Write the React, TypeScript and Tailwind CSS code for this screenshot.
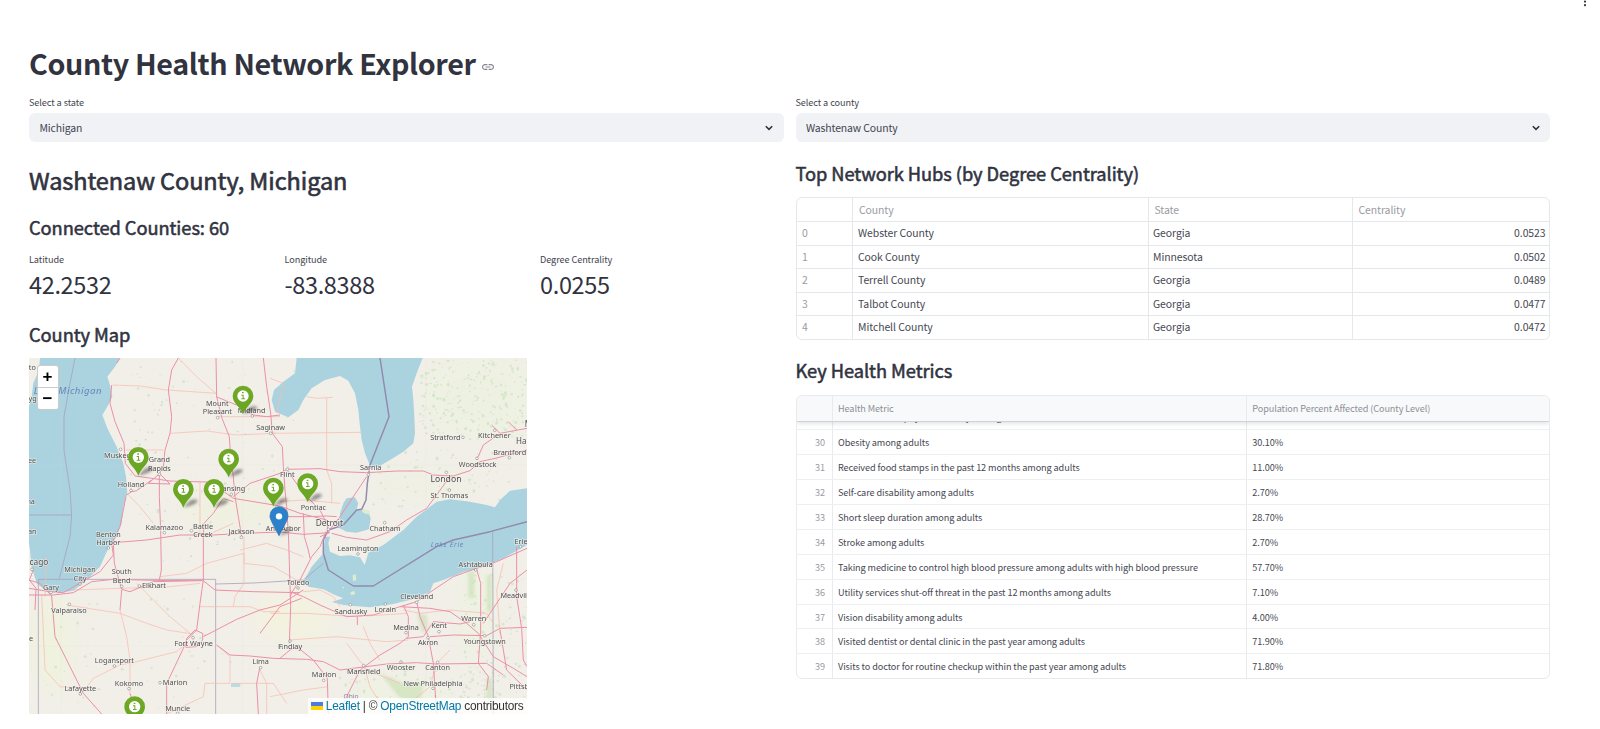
import React from "react";

const SANS = "font-['Noto_Sans_CJK_SC','Source_Sans_Pro',sans-serif]";

const hubs = [
  ["Webster County", "Georgia", "0.0523"],
  ["Cook County", "Minnesota", "0.0502"],
  ["Terrell County", "Georgia", "0.0489"],
  ["Talbot County", "Georgia", "0.0477"],
  ["Mitchell County", "Georgia", "0.0472"],
];

const metrics = [
  ["30", "Obesity among adults", "30.10%"],
  ["31", "Received food stamps in the past 12 months among adults", "11.00%"],
  ["32", "Self-care disability among adults", "2.70%"],
  ["33", "Short sleep duration among adults", "28.70%"],
  ["34", "Stroke among adults", "2.70%"],
  ["35", "Taking medicine to control high blood pressure among adults with high blood pressure", "57.70%"],
  ["36", "Utility services shut-off threat in the past 12 months among adults", "7.10%"],
  ["37", "Vision disability among adults", "4.00%"],
  ["38", "Visited dentist or dental clinic in the past year among adults", "71.90%"],
  ["39", "Visits to doctor for routine checkup within the past year among adults", "71.80%"],
];

// Map drawing units: three per pixel.
const water = [
  "27,170 35,140 40,100 57,60 60,24 300,24 285,50 262,80 270,105 277,140 262,170 247,195 262,235 290,290 310,340 318,380 322,430 310,470 305,520 290,560 265,595 240,650 200,690 160,722 110,730 75,720 50,700 35,650 30,600 27,580",
  "830,24 825,70 790,95 762,120 755,150 765,185 805,202 835,180 850,150 875,115 915,90 960,78 985,92 1005,130 1015,180 1020,230 1025,270 1035,310 1052,352 1075,350 1110,330 1150,305 1180,280 1185,250 1183,200 1180,150 1176,110 1190,70 1208,24",
  "970,460 980,445 1005,442 1015,460 1010,478 1045,485 1052,505 1047,538 1010,548 980,545 950,530 960,515 960,490",
  "1521,415 1470,422 1440,450 1425,472 1400,465 1350,455 1290,448 1250,455 1190,500 1150,540 1090,585 1045,608 1034,645 1020,622 990,616 960,618 930,605 925,580 930,560 915,560 910,610 875,650 850,695 865,710 910,718 945,735 970,745 935,756 970,765 1000,768 1050,772 1120,762 1190,745 1230,725 1240,700 1270,690 1330,666 1390,650 1450,625 1521,585",
];
const islands = ["998,676 1007,672 1009,690 999,694", "990,728 1002,722 1006,732 994,736", "966,712 972,710 972,716", "1018,474 1050,482 1050,494 1032,490"];

const borders = [
  "165,24 150,100 132,200 132,300 150,420 155,495 150,560 118,685",
  "27,495 155,495",
  "55,688 587,688 587,1092",
  "55,688 55,1092",
  "587,702 700,699 850,690 910,640",
  "1418,545 1420,1092",
];
const boundary =
  "1080,24 1107,200 1050,345 1042,400 1038,450 1025,478 1010,480 970,525 925,540 910,570 910,610 925,660 1000,708 1060,708 1250,590 1300,570 1410,545 1521,515";

const majorRoads = [
  "475,24 455,60 445,120 455,200 450,250 435,300 430,350 418,372 418,440 422,540 424,660 418,690",
  "275,105 270,160 285,215 312,280 316,340 345,378 395,385 450,393 520,395 560,396 605,420 640,445 780,468 840,490 920,510",
  "420,370 385,400 450,402 420,372",
  "320,435 335,425 350,422 395,390",
  "588,24 590,140 606,205 628,260 632,320 640,380 645,440 655,500 665,560",
  "730,24 740,110 752,190 757,250 787,290 790,350 795,420 800,470 806,570",
  "780,195 740,200 700,195 650,165 588,140",
  "640,440 690,400 780,370 800,358 900,356 960,365 1040,368 1130,363 1210,363 1240,375 1300,378 1350,362 1380,335 1425,325 1521,300",
  "640,455 610,445 580,490 552,520 550,560 550,690 540,760 530,840",
  "530,840 500,870 490,895 450,980 440,1000 440,1092",
  "27,735 100,735 160,728 215,695 280,688 450,692 547,690 585,720 700,725 838,728",
  "300,24 290,40",
  "40,660 28,690 48,715 45,780",
  "27,715 90,725 130,728 240,665 280,615 275,580 300,530 318,440",
  "95,738 105,860 190,1030 245,1092",
  "280,580 283,640 305,718 330,725 400,695 547,692",
  "305,720 300,780",
  "497,890 500,865 525,840 548,850 548,870 530,890 497,892",
  "550,860 650,808 720,780 780,765 850,720",
  "280,578 380,570 480,555 580,555 670,550 780,546 850,553 930,548",
  "800,358 850,430 900,480 925,530",
  "918,545 900,590 875,620 840,690 820,720 810,740",
  "925,545 960,500 1040,380",
  "806,570 808,640 812,770 808,880",
  "850,490 853,560 865,600 870,625",
  "920,515 925,550 900,560",
  "780,500 860,500 920,498 950,500",
  "935,550 980,562 1040,570 1110,545 1160,510 1220,475 1290,380",
  "1415,225 1440,250 1390,285 1370,330",
  "1465,215 1490,240",
  "1440,250 1521,235",
  "810,725 850,740 900,765 980,800 1060,795 1140,770 1190,755 1240,720 1300,680 1370,655 1430,635 1521,595",
  "1012,800 1012,825",
  "720,850 780,770 845,745",
  "720,950 710,1000 715,1092",
  "590,885 630,915 690,918 760,925 860,928 910,935 960,960 1100,942 1190,938 1250,942 1400,940 1450,975",
  "780,925 810,900 830,890 880,930 922,985 925,1092",
  "970,1060 1020,960 1080,915 1140,880 1165,860 1165,800 1150,765",
  "1140,770 1230,775 1290,785 1340,820 1375,850 1420,920 1480,955 1521,980",
  "1190,755 1200,800 1225,860 1240,940 1250,1092",
  "1370,658 1382,700 1382,840 1375,940 1405,980 1400,1020",
  "1490,590 1490,740 1505,835 1510,930 1521,950",
  "1230,860 1300,855 1400,857 1440,835 1521,832",
  "1160,865 1210,860 1240,815 1320,822 1350,815",
  "1440,840 1450,900 1460,960 1521,1020",
  "1390,820 1470,700 1521,660",
  "27,690 60,700 95,738",
  "330,1030 340,1060 345,1092",
];

const minorRoads = [
  "278,105 360,108 440,120 590,130",
  "475,24 530,80 588,130",
  "450,250 560,243 650,255 760,250 1025,247",
  "318,300 430,300",
  "590,200 700,200 780,200",
  "540,396 540,550",
  "320,430 360,470 400,520",
  "750,85 790,100 770,190",
  "860,140 890,145 938,142",
  "920,145 920,360",
  "920,360 935,400 935,460",
  "780,455 850,450 960,460",
  "660,600 740,580 800,600 850,620",
  "155,720 450,710 540,700",
  "65,735 75,960 120,1010 180,1015",
  "190,1025 220,985 300,945 350,935 470,905 500,880",
  "300,780 320,860 330,930 330,1030",
  "140,765 300,790 380,820 440,840 520,852",
  "350,700 400,750 450,800 510,850",
  "420,680 500,670 560,640 672,610 672,700 645,740 640,770",
  "672,560 672,640 760,650 830,690",
  "540,770 690,770 730,785 780,785",
  "590,885 630,920 630,1000 555,1000 550,1040 440,1092",
  "640,1000 760,1000 800,1060",
  "720,960 740,1000 740,1092",
  "808,870 950,860 1100,875 1165,870",
  "1030,830 1050,880 1080,930",
  "750,790 860,790 1010,800 1160,790",
  "1030,940 1050,1010 1100,1092",
  "1150,780 1200,790 1290,780",
  "1290,780 1400,790 1420,820",
  "980,880 1040,960 1140,1000",
  "1450,640 1430,720 1440,850",
  "750,1040 850,1020 925,1010",
  "1290,900 1250,940 1230,1010 1180,1050",
  "850,725 900,720 940,740 960,770",
  "75,740 80,620",
  "552,560 640,520",
];

const cities: [string, number, number, number?][] = [
  ["Mount", 592, 167], ["Pleasant", 592, 193], ["Midland", 695, 188], ["Saginaw", 752, 241],
  ["Muskegon", 306, 323], ["Grand", 418, 336], ["Rapids", 418, 362], ["Holland", 333, 410],
  ["Lansing", 636, 424], ["Kalamazoo", 433, 540], ["Battle", 549, 536], ["Creek", 549, 561],
  ["Jackson", 664, 552], ["Ann Arbor", 790, 542], ["Benton", 265, 560], ["Harbor", 265, 586],
  ["Flint", 802, 381], ["Pontiac", 880, 480], ["Detroit", 928, 527, 25], ["Chatham", 1095, 543],
  ["Sarnia", 1052, 360], ["Stratford", 1276, 271], ["Kitchener", 1423, 264], ["Hamilton", 1540, 282, 24],
  ["Brantford", 1469, 314], ["Woodstock", 1373, 352], ["London", 1278, 396, 26], ["St. Thomas", 1288, 445],
  ["M", 1525, 232, 24], ["Leamington", 1014, 602], ["Michigan", 180, 667], ["City", 180, 693],
  ["South", 305, 673], ["Bend", 305, 698], ["Elkhart", 402, 715], ["Gary", 93, 719],
  ["Valparaiso", 147, 788], ["Fort Wayne", 521, 887], ["Logansport", 283, 938], ["Kokomo", 327, 1007],
  ["Marion", 465, 1005], ["Lafayette", 181, 1024], ["Muncie", 473, 1082], ["Lima", 722, 942],
  ["Toledo", 834, 705], ["Sandusky", 993, 791], ["Lorain", 1096, 786], ["Cleveland", 1190, 746],
  ["Medina", 1158, 839], ["Kent", 1257, 835], ["Akron", 1224, 885], ["Warren", 1361, 814],
  ["Youngstown", 1394, 882], ["Ashtabula", 1367, 651], ["Erie", 1503, 581], ["Meadville", 1490, 743],
  ["Findlay", 810, 897], ["Mansfield", 1031, 971], ["Wooster", 1143, 959], ["Canton", 1253, 961],
  ["Marion", 912, 981], ["New Philadelphia", 1239, 1007], ["Pittsburgh", 1522, 1018], ["Chicago", 38, 646, 25],
  ["ee", 36, 338], ["ha", 32, 462], ["an", 37, 553], ["to", 37, 60], ["yg", 38, 153], ["e", 33, 874], ["F", 782, 897],
];

const dots = [
  [593, 203], [697, 198], [752, 250], [302, 298], [418, 373], [333, 421], [634, 433], [433, 548], [514, 542],
  [664, 562], [265, 594], [802, 358], [1045, 374], [1329, 262], [1424, 241], [1468, 323], [1371, 325], [1279, 367],
  [1288, 420], [1094, 518], [925, 538], [1014, 612], [180, 702], [305, 709], [358, 708], [93, 727], [148, 763],
  [519, 863], [283, 948], [327, 1016], [420, 998], [181, 1032], [473, 1090], [722, 953], [834, 714], [991, 764],
  [1096, 762], [1190, 757], [1158, 848], [1257, 845], [1224, 863], [1361, 824], [1394, 857], [1367, 660],
  [1501, 590], [1488, 720], [810, 873], [1031, 947], [1143, 936], [1253, 937], [911, 991], [1239, 1015], [36, 658],
];

const greenPins = [[669, 192], [355, 376], [626, 381], [490, 472], [582, 472], [760, 468], [863, 455], [344, 1124]];

// Deterministic speckle standing for woods and ponds.
function speckle(seed: number, n: number, x0: number, y0: number, w: number, h: number) {
  let s = seed * 7919;
  const next = () => (s = (s * 16807) % 2147483647) / 2147483647;
  next();
  return Array.from({ length: n }, () => {
    const x = x0 + next() * w;
    const y = y0 + next() * h;
    const r = 1 + next() * 3.6;
    return [x, y, r, 0.4 + next()] as const;
  });
}
const woods = [
  ...speckle(11, 300, 1200, 30, 320, 240),
  ...speckle(29, 90, 1060, 300, 460, 180),
  ...speckle(41, 160, 1330, 670, 190, 410),
  ...speckle(53, 120, 960, 960, 480, 130),
  ...speckle(67, 90, 330, 30, 500, 500),
  ...speckle(71, 60, 60, 740, 500, 340),
];
const ponds = [...speckle(83, 40, 340, 120, 400, 460), ...speckle(97, 26, 300, 560, 400, 400), ...speckle(101, 20, 1200, 60, 320, 280)];

function Lines({ list, stroke, width }: { list: string[]; stroke: string; width: number }) {
  return (
    <g fill="none" stroke={stroke} strokeWidth={width} strokeLinejoin="round">
      {list.map((p) => (
        <polyline key={p} points={p} />
      ))}
    </g>
  );
}

function CountyMap() {
  return (
    <div className="relative mt-[10px] h-[356px] w-[498px] overflow-hidden bg-[#f2efe9]">
      <svg viewBox="27 24 1494 1068" className="block h-full w-full" preserveAspectRatio="none">
        <defs>
          <filter id="soft" x="-20%" y="-20%" width="140%" height="140%">
            <feGaussianBlur stdDeviation="28" />
          </filter>
          <filter id="shade" x="-50%" y="-50%" width="200%" height="200%">
            <feGaussianBlur stdDeviation="4" />
          </filter>
          <linearGradient id="pin" x1="0" y1="0" x2="0" y2="1">
            <stop offset="0" stopColor="#70a928" />
            <stop offset="1" stopColor="#67a51f" />
          </linearGradient>
        </defs>
        <rect x="27" y="24" width="1494" height="1068" fill="#f2efe9" />
        <g filter="url(#soft)" fill="#eef1e2">
          <ellipse cx="1380" cy="140" rx="180" ry="130" />
          <ellipse cx="1200" cy="400" rx="170" ry="60" opacity=".7" />
          <ellipse cx="1370" cy="790" rx="60" ry="150" />
          <ellipse cx="820" cy="800" rx="120" ry="70" fill="#f3f2df" />
          <ellipse cx="100" cy="880" rx="60" ry="150" fill="#eff2dd" />
          <ellipse cx="1130" cy="1030" rx="170" ry="50" />
          <ellipse cx="650" cy="480" rx="180" ry="60" fill="#eff0e0" />
        </g>
        <g fill="#c0dfb4" opacity=".55">
          {woods.map(([x, y, r, k], i) => (
            <ellipse key={i} cx={x} cy={y} rx={r} ry={r * k} />
          ))}
        </g>
        <g fill="#a9d3df" opacity=".7">
          {ponds.map(([x, y, r, k], i) => (
            <ellipse key={i} cx={x} cy={y} rx={r * 0.7} ry={r * k * 0.6} />
          ))}
          <rect x="633" y="999" width="28" height="12" />
        </g>
        <g fill="#cfe2ba" opacity=".75" filter="url(#shade)">
          <path d="M1345 665h18v80h-18zM1400 675h16v110h-16zM1400 985h18v80h-18zM1080 970l70 30 60 5 -10 60 -60 -20zM1190 790l30 5 5 50 -20 0z" />
        </g>
        <g fill="#aad3df">
          {water.map((p) => (
            <polygon key={p} points={p} />
          ))}
        </g>
        <g fill="#ddebcf">
          {islands.map((p) => (
            <polygon key={p} points={p} />
          ))}
        </g>
        <g stroke="#dcdde2" strokeWidth="1" opacity=".5">
          <path d="M123 24V1092M668 24V1092M1217 24V1092M27 345H1521M27 889H1521" />
        </g>
        <Lines list={borders} stroke="#a9a0bb" width={2.4} />
        <Lines list={[boundary]} stroke="#9489ae" width={4.4} />
        <Lines list={minorRoads} stroke="#f8bcae" width={2.2} />
        <Lines list={majorRoads} stroke="#eb8fa7" width={3} />
        <g fill="#fff" stroke="#777" strokeWidth="1.6">
          {dots.map(([x, y], i) => (
            <circle key={i} cx={x} cy={y} r="4" />
          ))}
        </g>
        <g
          textAnchor="middle"
          fill="#505050"
          stroke="#f4f1ec"
          strokeWidth="4"
          strokeOpacity=".7"
          paintOrder="stroke"
          className="font-['Noto_Sans',sans-serif]"
        >
          {cities.map(([name, x, y, size], i) => (
            <text key={i} x={x} y={y} fontSize={size ?? 21.8}>
              {name}
            </text>
          ))}
        </g>
        <g textAnchor="middle" className="font-['Noto_Sans',sans-serif] italic" fill="#6487bd">
          <text x="143" y="132" fontSize="29" textLength="204">Lake Michigan</text>
          <text x="1281" y="592" fontSize="21" textLength="98">Lake Erie</text>
          <text x="993" y="1046" fontSize="20" fill="#8d7fae" className="not-italic">Ohio</text>
        </g>
        {greenPins.map(([x, y]) => (
          <g key={`${x}-${y}`} transform={`translate(${x} ${y})`}>
            <path d="M0 0C12 -3 32 -6 42 -17C46 -24 30 -26 20 -20Z" fill="#333" opacity=".5" filter="url(#shade)" />
            <path d="M0 1C-8 -22 -31 -32 -31 -54A31 31 0 1 1 31 -54C31 -32 8 -22 0 1Z" fill="url(#pin)" />
            <circle cx="0" cy="-54" r="17" fill="#fff" />
            <path d="M-4 -62h6v-4h-5v4M-5 -58h7v11h4v3h-11v-3h4v-8h-4z" fill="#70a928" />
          </g>
        ))}
        <g transform="translate(777 557)">
          <path d="M0 0C12 -2 28 -6 34 -17C38 -24 26 -24 18 -18Z" fill="#333" opacity=".45" filter="url(#shade)" />
          <path
            d="M0 0L-20 -38C-26 -50 -28 -58 -27 -60A27 27 0 0 1 27 -60C27 -54 24 -46 20 -38Z"
            fill="#2b82cb"
            stroke="#2871b3"
            strokeWidth="2"
          />
          <circle cx="0" cy="-58" r="9.5" fill="#fff" />
        </g>
      </svg>
      <div className="absolute left-[7.5px] top-[7px] flex flex-col rounded-[3px] border border-black/20 bg-white font-['Liberation_Sans',sans-serif] text-[17px] font-bold leading-[21px] text-black">
        <button className="h-[21.5px] w-[20px] border-b border-[#ccc]">+</button>
        <button className="h-[21px] w-[20px]">−</button>
      </div>
      <div className="absolute bottom-0 right-0 flex h-[16px] items-center whitespace-nowrap bg-white/80 pl-[3px] pr-[3.5px] font-['Liberation_Sans',sans-serif] text-[11.9px] leading-[16px] tracking-[-0.24px] text-[#333]">
        <svg viewBox="0 0 12 8" className="mr-[3px] h-[8px] w-[12px]">
          <path fill="#4C7BE1" d="M0 0h12v4H0z" />
          <path fill="#FFD500" d="M0 4h12v4H0z" />
        </svg>
        <a className="text-[#0078A8]">Leaflet</a>
        <span className="whitespace-pre"> | © </span>
        <a className="text-[#0078A8]">OpenStreetMap</a>
        <span className="whitespace-pre"> contributors</span>
      </div>
    </div>
  );
}

function Select({ label, value }: { label: string; value: string }) {
  return (
    <div>
      <div className="h-[15px] text-[9.13px] leading-[15px] tracking-[-0.08px] text-[#42444f]">{label}</div>
      <div className="mt-[3px] flex h-[29px] items-center justify-between rounded-[6px] bg-[#f0f2f6] pl-[10.5px] pr-[10.5px]">
        <span className="text-[10.43px] leading-[28px] tracking-[-0.12px] text-[#42444f]">{value}</span>
        <svg viewBox="0 0 8 6" className="h-[6px] w-[8px]" fill="none" stroke="#31333F" strokeWidth="1.6">
          <path d="M0.8 1.2L4 4.4L7.2 1.2" />
        </svg>
      </div>
    </div>
  );
}

function Metric({ label, value }: { label: string; value: string }) {
  return (
    <div>
      <div className="h-[14px] text-[9.13px] leading-[14px] tracking-[-0.08px] text-[#42444f]">{label}</div>
      <div className="mt-[2px] h-[32px] text-[23.5px] leading-[32px] tracking-[-0.35px]">{value}</div>
    </div>
  );
}

const H3 =
  "text-[18.26px] leading-[28px] h-[28px] font-normal tracking-[-0.05px] [-webkit-text-stroke:0.55px_#31333F]";

export default function App() {
  return (
    <div className={`${SANS} h-[729px] w-full overflow-hidden bg-white pl-[29px] pr-[50px] text-[#31333F]`}>
      <header className="flex h-[38px] justify-end">
        <svg viewBox="0 0 4 8" className="-mr-[36.5px] h-[8px] w-[4px]" fill="#31333F">
          <circle cx="2" cy="1.6" r="1.1" />
          <circle cx="2" cy="5.2" r="1.1" />
        </svg>
      </header>
      <h1 className="flex h-[49px] items-center text-[28.7px] font-bold leading-[49px] tracking-[-0.36px]">
        County Health Network Explorer
        <svg viewBox="2 7 20 10" className="ml-[6px] mt-[9px] h-[6px] w-[12px]" fill="#85868e">
          <path d="M3.9 12c0-1.71 1.39-3.1 3.1-3.1h4V7H7c-2.76 0-5 2.24-5 5s2.24 5 5 5h4v-1.9H7c-1.71 0-3.1-1.39-3.1-3.1zM8 13h8v-2H8v2zm9-6h-4v1.9h4c1.71 0 3.1 1.39 3.1 3.1s-1.39 3.1-3.1 3.1h-4V17h4c2.76 0 5-2.24 5-5s-2.24-5-5-5z" />
        </svg>
      </h1>
      <div className="mt-[8px] grid grid-cols-2 gap-x-[12px]">
        <Select label="Select a state" value="Michigan" />
        <Select label="Select a county" value="Washtenaw County" />
        <section>
          <h2 className="mt-[20px] h-[36px] text-[23.5px] font-normal leading-[36px] tracking-[-0.08px] [-webkit-text-stroke:0.65px_#31333F]">
            Washtenaw County, Michigan
          </h2>
          <h3 className={`mt-[15px] ${H3}`}>Connected Counties: 60</h3>
          <div className="mt-[11px] grid grid-cols-3 gap-x-[12px]">
            <Metric label="Latitude" value="42.2532" />
            <Metric label="Longitude" value="-83.8388" />
            <Metric label="Degree Centrality" value="0.0255" />
          </div>
          <h3 className={`mt-[20px] ${H3}`}>County Map</h3>
          <CountyMap />
        </section>
        <section>
          <h3 className={`mt-[17px] ${H3}`}>Top Network Hubs (by Degree Centrality)</h3>
          <div className="mt-[10px] overflow-hidden rounded-[6px] border border-[#e6e7ea] text-[10.43px] tracking-[-0.07px]">
            <div className="grid h-[23px] grid-cols-[56.5px_295.5px_204px_1fr] leading-[23px] text-[#9a9ba2]">
              <span className="border-r border-[#e6e7ea]" />
              <span className="border-r border-[#e6e7ea] pl-[6px]">County</span>
              <span className="border-r border-[#e6e7ea] pl-[6px]">State</span>
              <span className="pl-[6px]">Centrality</span>
            </div>
            {hubs.map(([county, state, c], i) => (
              <div
                key={county}
                className="grid h-[23.6px] grid-cols-[56.5px_295.5px_204px_1fr] border-t border-[#e6e7ea] leading-[21.5px]"
              >
                <span className="border-r border-[#e6e7ea] pl-[5.5px] text-[#9a9ba2]">{i}</span>
                <span className="border-r border-[#e6e7ea] pl-[5px] text-[#464853]">{county}</span>
                <span className="border-r border-[#e6e7ea] pl-[4.5px] text-[#464853]">{state}</span>
                <span className="pr-[3.5px] text-right text-[#464853]">{c}</span>
              </div>
            ))}
          </div>
          <h3 className={`mt-[16px] ${H3}`}>Key Health Metrics</h3>
          <div className="mt-[11.5px] overflow-hidden rounded-[6px] border border-[#e9eaed] text-[9.13px] tracking-[-0.09px]">
            <div className="relative z-10 grid h-[26px] grid-cols-[36.5px_414.3px_1fr] border-b border-[#d0d2d6] bg-[#f8f9fb] leading-[25px] text-[#8f9098] shadow-[0_2px_4px_rgba(0,0,0,0.1)]">
              <span className="border-r border-[#e9eaed]" />
              <span className="border-r border-[#e9eaed] pl-[5px]">Health Metric</span>
              <span className="pl-[5px]">Population Percent Affected (County Level)</span>
            </div>
            <div className="grid h-[6.6px] grid-cols-[36.5px_414.3px_1fr] overflow-hidden">
              <span className="border-r border-[#e9eaed]" />
              <span className="flex items-end overflow-hidden border-r border-[#e9eaed] pl-[5px] text-[#464853]">
                <span className="h-[25px] shrink-0 leading-[24.5px]">No leisure-time physical activity among adults</span>
              </span>
              <span />
            </div>
            {metrics.map(([n, name, v]) => (
              <div
                key={n}
                className="grid h-[24.93px] grid-cols-[36.5px_414.3px_1fr] border-t border-[#eeeff1] leading-[24px] text-[#464853]"
              >
                <span className="border-r border-[#e9eaed] pr-[7px] text-right text-[#9a9ba2]">{n}</span>
                <span className="border-r border-[#e9eaed] pl-[5px]">{name}</span>
                <span className="pl-[5px]">{v}</span>
              </div>
            ))}
          </div>
        </section>
      </div>
    </div>
  );
}
